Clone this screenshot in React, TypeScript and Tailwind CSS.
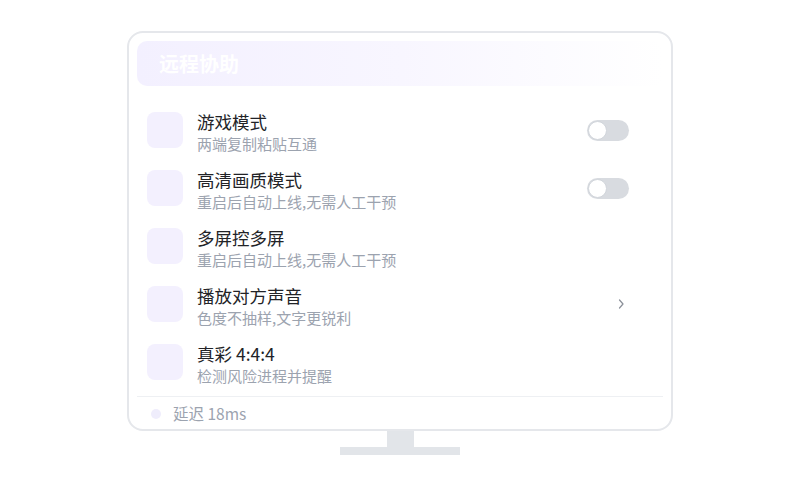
import React from "react";

const rows = [
  { title: "游戏模式", desc: "两端复制粘贴互通", action: "toggle" },
  { title: "高清画质模式", desc: "重启后自动上线,无需人工干预", action: "toggle" },
  { title: "多屏控多屏", desc: "重启后自动上线,无需人工干预", action: "none" },
  { title: "播放对方声音", desc: "色度不抽样,文字更锐利", action: "chevron" },
  { title: "真彩 4:4:4", desc: "检测风险进程并提醒", action: "none" },
];

const Toggle = () => (
  <div className="w-[42px] h-[21px] rounded-full bg-[#d8dbe0] p-[1px] flex items-center">
    <div className="w-[19px] h-[19px] rounded-full bg-white border border-[#d1d5db]" />
  </div>
);

const App = () => {
  return (
    <div
      className="w-[800px] h-[500px] bg-white flex flex-col items-center pt-[31px]"
      style={{ fontFamily: '"Noto Sans CJK SC", "Noto Sans", sans-serif' }}
    >
      <div className="w-[546px] h-[400px] rounded-[16px] border-2 border-[#e5e7eb] bg-white px-[8px] pt-[8px] flex flex-col">
        <div className="h-[45px] rounded-[10px] bg-gradient-to-r from-[#f3f0ff] via-[#f8f6ff] to-white flex items-center pl-[22px]">
          <span className="text-[20px] font-bold text-white leading-none">远程协助</span>
        </div>

        <div className="mt-[15px] flex flex-col px-[10px]">
          {rows.map((r) => (
            <div key={r.title} className="h-[58px] py-[11px] flex items-start pr-[24px]">
              <div className="w-[36px] h-[36px] rounded-[8px] bg-[#f3f0fe] shrink-0" />
              <div className="ml-[14px] -mt-[1px] flex flex-col flex-1">
                <span className="text-[17.5px] leading-[22px] text-[#222327]">{r.title}</span>
                <span className="mt-[1px] text-[15px] leading-[20px] text-[#9ca3af]">{r.desc}</span>
              </div>
              <div className="self-center flex items-center">
                {r.action === "toggle" && <Toggle />}
                {r.action === "chevron" && (
                  <svg width="8" height="12" viewBox="0 0 8 12" className="mr-[4px]">
                    <path d="M2.5 2 L6 6 L2.5 10" fill="none" stroke="#8b9099" strokeWidth="1.2" strokeLinecap="round" strokeLinejoin="round" />
                  </svg>
                )}
              </div>
            </div>
          ))}
        </div>

        <div className="mt-[5px] border-t border-[#eef0f3]" />
        <div className="flex-1 flex items-center pl-[14px] pt-[2px]">
          <div className="w-[10px] h-[10px] rounded-full bg-[#efedfc]" />
          <span className="ml-[12px] text-[15.5px] text-[#9ca3af] leading-none">延迟 18ms</span>
        </div>
      </div>
      <div className="w-[27px] h-[16px] bg-[#e2e5e9]" />
      <div className="w-[120px] h-[8px] bg-[#e2e5e9]" />
    </div>
  );
};

export default App;
